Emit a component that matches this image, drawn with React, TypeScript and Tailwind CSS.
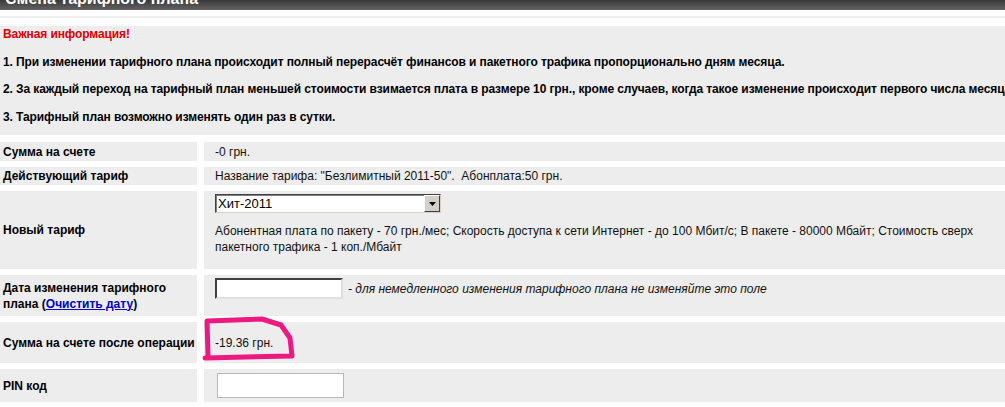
import React from 'react';

const font = { fontFamily: '"Liberation Sans", Arial, sans-serif' };

function Row({ label, children, className = '', valueClass = '' }: { label: React.ReactNode; children: React.ReactNode; className?: string; valueClass?: string }) {
  return (
    <div className={`flex gap-[7px] ${className}`}>
      <div className="w-[197px] shrink-0 bg-[#ededed] pl-[3px] flex items-center text-[12px] font-bold text-black leading-[16px]">
        {label}
      </div>
      <div className={`flex-1 bg-[#ededed] pl-[11px] text-[12px] text-[#111] leading-[16px] ${valueClass}`}>{children}</div>
    </div>
  );
}

export default function App() {
  return (
    <div className="w-[1005px] h-[407px] overflow-hidden bg-white relative" style={font}>
      <div className="h-[10px] overflow-hidden bg-gradient-to-b from-[#3a3a3a] to-[#636363]">
        <div className="text-white font-bold text-[16px] leading-[16px] mt-[-9px] pl-[5px]">Смена тарифного плана</div>
      </div>
      <div className="h-[6px]" />
      <div className="h-[2px] bg-[#f0f0f0]" />
      <div className="h-[8px]" />

      <div className="bg-[#ededed] pl-[3px] pt-[1px] pb-[11px] text-[12px] font-bold leading-[14px] tracking-[-0.1px]">
        <p className="text-[#e00000]">Важная информация!</p>
        <p className="mt-[14px] text-black">1. При изменении тарифного плана происходит полный перерасчёт финансов и пакетного трафика пропорционально дням месяца.</p>
        <p className="mt-[13px] text-black whitespace-nowrap">2. За каждый переход на тарифный план меньшей стоимости взимается плата в размере 10 грн., кроме случаев, когда такое изменение происходит первого числа месяца.</p>
        <p className="mt-[14px] text-black">3. Тарифный план возможно изменять один раз в сутки.</p>
      </div>

      <div className="mt-[7px] flex flex-col gap-[6px]">
        <Row label="Сумма на счете" className="h-[19px]" valueClass="flex items-center">
          -0 грн.
        </Row>
        <Row label="Действующий тариф" className="h-[18px]" valueClass="flex items-center">
          Название тарифа: "Безлимитный 2011-50".&nbsp; Абонплата:50 грн.
        </Row>
        <Row label="Новый тариф" className="h-[78px]" valueClass="pt-[3px]">
          <div className="w-[226px] h-[19px] flex bg-white border border-t-[#404040] border-l-[#404040] border-r-[#d4d0c8] border-b-[#d4d0c8] shadow-[inset_1px_1px_0_#808080]">
            <div className="flex-1 text-[13px] leading-[17px] pl-[2px] text-black">Хит-2011</div>
            <div className="w-[16px] h-[17px] bg-[#d4d0c8] border border-t-white border-l-white border-r-[#404040] border-b-[#404040] flex items-center justify-center">
              <svg width="7" height="4" viewBox="0 0 7 4"><path d="M0 0h7L3.5 4z" fill="#000" /></svg>
            </div>
          </div>
          <div className="mt-[10px] w-[770px]">
            Абонентная плата по пакету - 70 грн./мес; Скорость доступа к сети Интернет - до 100 Мбит/с; В пакете - 80000 Мбайт; Стоимость сверх пакетного трафика - 1 коп./Мбайт
          </div>
        </Row>
        <Row
          label={
            <span>
              Дата изменения тарифного
              <br />
              плана (<a className="text-[#0000cc] underline">Очистить дату</a>)
            </span>
          }
          className="h-[41px]"
          valueClass="pt-[3px] flex items-start"
        >
          <div className="w-[128px] h-[21px] bg-white border-2 border-t-[#404040] border-l-[#404040] border-r-[#e0e0e0] border-b-[#e0e0e0]" />
          <span className="ml-[5px] italic mt-[3px]">- для немедленного изменения тарифного плана не изменяйте это поле</span>
        </Row>
        <Row label="Сумма на счете после операции" className="h-[41px]" valueClass="flex items-center">
          -19.36 грн.
        </Row>
        <Row label="PIN код" className="h-[33px]" valueClass="pt-[4px] pl-[13px]">
          <div className="w-[127px] h-[25px] bg-white border border-[#b8b8b8]" />
        </Row>
      </div>

      <svg className="absolute left-0 top-0 pointer-events-none" width="1005" height="407">
        <path
          d="M208 356 L207 321 L262 319 L281 325 L290 338 L292 356 L205 358"
          fill="none"
          stroke="#ec1a80"
          strokeWidth="5"
          strokeLinejoin="round"
          strokeLinecap="round"
        />
      </svg>
    </div>
  );
}
